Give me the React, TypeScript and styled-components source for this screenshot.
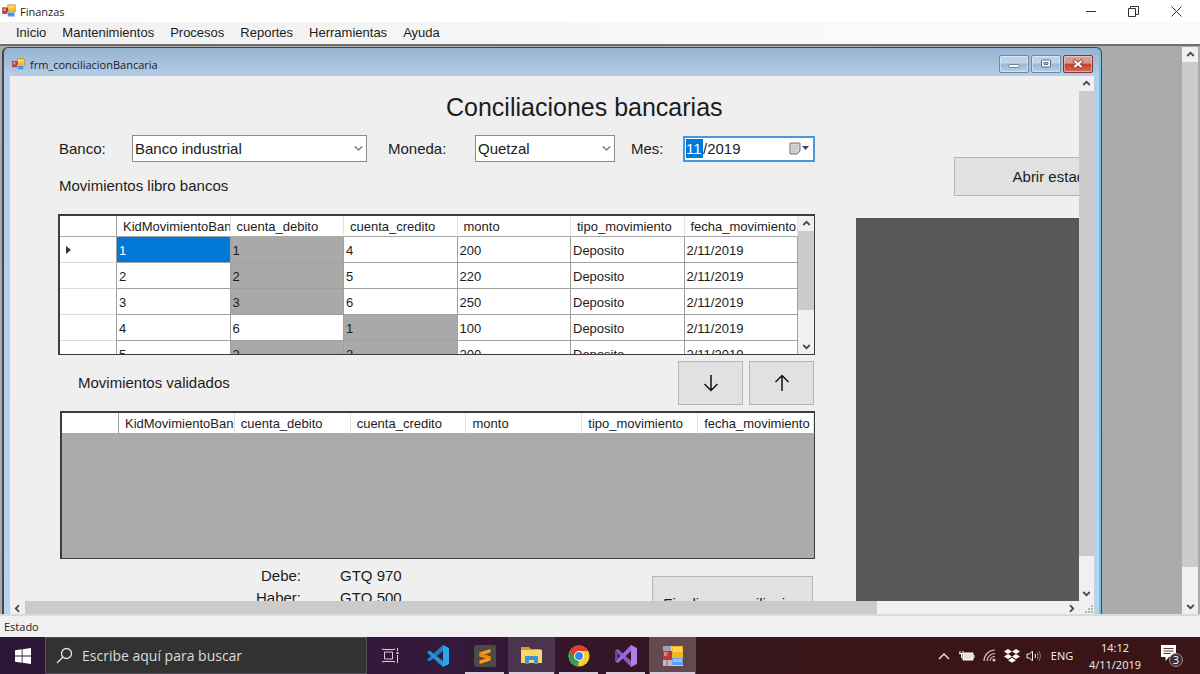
import React from "react";
import styled, { createGlobalStyle, css } from "styled-components";

const GlobalStyle = createGlobalStyle`
  * { box-sizing: border-box; }
  body {
    margin: 0;
    font-family: "Liberation Sans", Arial, sans-serif;
    color: #1c1c1c;
    overflow: hidden;
  }
  button, input, select { font: inherit; color: inherit; margin: 0; }
`;

const UI_FONT = '"Open Sans", "Noto Sans", sans-serif';

/* ---------- main window ---------- */

const Screen = styled.div`
  height: 100vh;
  display: flex;
  flex-direction: column;
  background: #efefef;
`;

const TitleBar = styled.header`
  height: 22px;
  flex: none;
  display: flex;
  align-items: center;
  gap: 4px;
  padding: 0 2px;
  background: #fff;
  font: 11px ${UI_FONT};
`;

const WindowButtons = styled.div`
  margin-left: auto;
  display: flex;
`;

const WindowButton = styled.button`
  width: 43px;
  height: 22px;
  padding: 0;
  border: 0;
  background: none;
  display: flex;
  align-items: center;
  justify-content: center;
`;

const MenuBar = styled.nav`
  height: 22px;
  flex: none;
  display: flex;
  align-items: center;
  gap: 16px;
  padding: 0 16px;
  background: linear-gradient(90deg, #f0f0f0, #fafafa 75%);
`;

const MenuItem = styled.button`
  padding: 0;
  border: 0;
  background: none;
  font-size: 13px;
  line-height: 20px;
`;

const Workspace = styled.main`
  flex: 1;
  min-height: 0;
  display: flex;
  padding: 1px 2px 0;
  border-top: 2px solid #6f6f6f;
  background: #ababab;
`;

const StatusBar = styled.footer`
  height: 23px;
  flex: none;
  padding: 0 4px;
  border-top: 2px solid #dadada;
  background: #f0f0f0;
  font: 11px/22px ${UI_FONT};
`;

/* ---------- scroll bars ---------- */

const Bar = styled.div<{ $horizontal?: boolean; $size: number }>`
  flex: none;
  display: flex;
  background: #f0f0f0;
  ${(p) =>
    p.$horizontal
      ? css`flex-direction: row; height: ${p.$size}px;`
      : css`flex-direction: column; align-items: center; width: ${p.$size}px;`}
`;

const BarArrow = styled.button`
  flex: none;
  width: 15px;
  height: 15px;
  padding: 0;
  border: 0;
  background: none;
  display: flex;
  align-items: center;
  justify-content: center;
`;

const Track = styled.div<{ $horizontal?: boolean }>`
  flex: 1;
  min-height: 0;
  align-self: stretch;
  display: flex;
  flex-direction: ${(p) => (p.$horizontal ? "row" : "column")};
`;

const Thumb = styled.div<{ $share: number }>`
  flex: 0 0 ${(p) => p.$share}%;
  background: #cbcbcb;
`;

const turns = { up: 0, right: 90, down: 180, left: 270 };

function Chevron({ to }: { to: keyof typeof turns }) {
  return (
    <svg width="9" height="9" viewBox="0 0 9 9" fill="none" stroke="#4a4a4a" strokeWidth="1.8">
      <path d="M1.2 6 4.5 2.8 7.8 6" transform={`rotate(${turns[to]} 4.5 4.5)`} />
    </svg>
  );
}

function ScrollBar({ horizontal, share, size = 15 }: { horizontal?: boolean; share: number; size?: number }) {
  return (
    <Bar $horizontal={horizontal} $size={size}>
      <BarArrow aria-label={horizontal ? "Izquierda" : "Arriba"} tabIndex={-1}>
        <Chevron to={horizontal ? "left" : "up"} />
      </BarArrow>
      <Track $horizontal={horizontal}>
        <Thumb $share={share} />
      </Track>
      <BarArrow aria-label={horizontal ? "Derecha" : "Abajo"} tabIndex={-1}>
        <Chevron to={horizontal ? "right" : "down"} />
      </BarArrow>
    </Bar>
  );
}

/* ---------- child form ---------- */

const ChildForm = styled.section`
  flex: 1;
  min-width: 0;
  margin-right: 80px;
  display: flex;
  flex-direction: column;
  padding: 0 7px 0 6px;
  border: 2px solid #42484e;
  border-width: 1px 1px 0 2px;
  border-radius: 6px 6px 0 0;
  background: linear-gradient(180deg, #98b3d0, #b4cde8 28px, #b9d3ec);
  box-shadow: inset -2px 0 0 #6fc3e2;
`;

const ChildTitle = styled.header`
  height: 28px;
  flex: none;
  display: flex;
  align-items: center;
  gap: 5px;
  padding: 4px 1px 0 2px;
  font: 11px ${UI_FONT};
`;

const ChildButtons = styled.div`
  margin-left: auto;
  display: flex;
  gap: 2px;
`;

const ChildButton = styled.button<{ $close?: boolean }>`
  width: 30px;
  height: 18px;
  padding: 0;
  border: 1px solid ${(p) => (p.$close ? "#7a3a3c" : "#7088a4")};
  border-radius: 2px;
  box-shadow: inset 0 0 0 1px #ffffff66;
  background: ${(p) =>
    p.$close
      ? "linear-gradient(#dd9a8e 0 45%, #c2402c 50%, #d3705c)"
      : "linear-gradient(#bdd3ea 0 45%, #9bb8d6 50%, #b5cfe8)"};
  display: flex;
  align-items: center;
  justify-content: center;
`;

const ClientArea = styled.div`
  flex: 1;
  min-height: 0;
  display: flex;
  background: #efefef;
`;

const FormBody = styled.div`
  flex: 1;
  min-width: 0;
  overflow: hidden;
  padding: 16px 0 0 48px;
  font-size: 15px;
`;

const Heading = styled.h1`
  margin: 0 0 13px;
  padding-left: 388px;
  font-size: 25px;
  line-height: 30px;
  font-weight: 400;
  white-space: nowrap;
`;

const Columns = styled.div`
  display: flex;
  gap: 41px;
`;

const LeftColumn = styled.div`
  flex: none;
  width: 757px;
`;

const RightColumn = styled.aside`
  flex: none;
  width: 366px;
  display: flex;
  flex-direction: column;
  gap: 22px;
  padding-top: 22px;
`;

const ReportPanel = styled.div`
  height: 420px;
  width: 330px;
  background: #585858;
`;

const Filters = styled.div`
  display: flex;
  align-items: center;
  height: 27px;
`;

const FieldLabel = styled.label<{ $width: number; $gap?: number }>`
  width: ${(p) => p.$width}px;
  margin-left: ${(p) => p.$gap ?? 0}px;
  padding-left: 1px;
`;

const SelectBox = styled.div<{ $width: number }>`
  position: relative;
  width: ${(p) => p.$width}px;
  svg {
    position: absolute;
    right: 4px;
    top: 10px;
    pointer-events: none;
  }
`;

const Select = styled.select`
  appearance: none;
  display: block;
  width: 100%;
  height: 27px;
  padding: 0 20px 0 2px;
  border: 1px solid #8c8c8c;
  border-radius: 0;
  background: #fff;
`;

const MonthPicker = styled.div`
  display: flex;
  align-items: center;
  width: 132px;
  height: 26px;
  padding: 0 4px 0 1px;
  border: 2px solid #4b97d9;
  background: #fff;
`;

const DatePart = styled.input<{ $active?: boolean; $width: number }>`
  width: ${(p) => p.$width}px;
  height: 19px;
  padding: 0;
  border: 0;
  outline: 0;
  background: ${(p) => (p.$active ? "#0078d7" : "transparent")};
  color: ${(p) => (p.$active ? "#fff" : "inherit")};
`;

const CalendarButton = styled.button`
  margin-left: auto;
  padding: 0;
  border: 0;
  background: none;
  display: flex;
`;

const Caption = styled.h2`
  margin: 0;
  font-size: 15px;
  line-height: 20px;
  font-weight: 400;
`;

const BooksCaption = styled(Caption)`
  margin: 14px 0 18px 1px;
`;

const FlatButton = styled.button<{ $width: number; $height: number }>`
  flex: none;
  width: ${(p) => p.$width}px;
  height: ${(p) => p.$height}px;
  padding: 0;
  border: 1px solid #b5b5b5;
  background: #e1e1e1;
  display: flex;
  align-items: center;
  justify-content: center;
  white-space: nowrap;
`;

const StatementButton = styled(FlatButton)`
  align-self: flex-end;
`;

const MoveRow = styled.div`
  display: flex;
  align-items: center;
  gap: 6px;
  margin: 6px 1px 6px 20px;
  ${Caption} { flex: 1; }
`;

/* ---------- data grids ---------- */

const GridFrame = styled.div<{ $height: number; $inset?: number }>`
  display: flex;
  height: ${(p) => p.$height}px;
  margin-left: ${(p) => p.$inset ?? 0}px;
  overflow: hidden;
  border: 1px solid #3c3c3c;
  border-top-width: 2px;
  border-left-width: 2px;
  background: #ababab;
`;

const GridScroll = styled.div`
  flex: 1;
  min-width: 0;
  overflow: hidden;
`;

const Table = styled.table`
  width: 100%;
  table-layout: fixed;
  border-collapse: separate;
  border-spacing: 0;
  font-size: 13px;
`;

const HeadCell = styled.th`
  height: 21px;
  padding: 0 0 0 6px;
  overflow: hidden;
  text-align: left;
  font-weight: 400;
  white-space: nowrap;
  background: #fff;
  border-right: 1px solid #e4e4e4;
  border-bottom: 1px solid #a8a8a8;
  &:first-child { border-right-color: #a0a0a0; }
`;

const RowHead = styled.th`
  padding: 0 0 0 6px;
  text-align: left;
  background: #fff;
  border-right: 1px solid #a0a0a0;
  border-bottom: 1px solid #dcdcdc;
  svg { display: block; }
`;

const Cell = styled.td<{ $tone: "plain" | "selected" | "marked" }>`
  height: 26px;
  padding: 2px 0 0 2px;
  white-space: nowrap;
  border-right: 1px solid #a0a0a0;
  border-bottom: 1px solid #a0a0a0;
  ${(p) => p.$tone === "plain" && "background: #fff;"}
  ${(p) => p.$tone === "selected" && "background: #0078d7; color: #fff;"}
  ${(p) => p.$tone === "marked" && "background: #a9a9a9;"}
`;

const HEADERS = [
  "KidMovimientoBancario",
  "cuenta_debito",
  "cuenta_credito",
  "monto",
  "tipo_movimiento",
  "fecha_movimiento",
];

const ROWS = [
  { values: ["1", "1", "4", "200", "Deposito", "2/11/2019"], marked: [1] },
  { values: ["2", "2", "5", "220", "Deposito", "2/11/2019"], marked: [1] },
  { values: ["3", "3", "6", "250", "Deposito", "2/11/2019"], marked: [1] },
  { values: ["4", "6", "1", "100", "Deposito", "2/11/2019"], marked: [2] },
  { values: ["5", "2", "2", "200", "Deposito", "2/11/2019"], marked: [1, 2] },
];

function DataGrid({ rows }: { rows: typeof ROWS }) {
  return (
    <Table>
      <colgroup>
        <col width="57" />
        {HEADERS.map((h) => <col key={h} />)}
      </colgroup>
      <thead>
        <tr>
          <HeadCell aria-label="Fila" />
          {HEADERS.map((h) => <HeadCell key={h} scope="col">{h}</HeadCell>)}
        </tr>
      </thead>
      <tbody>
        {rows.map((row, r) => (
          <tr key={r}>
            <RowHead scope="row">
              {r === 0 && <svg width="6" height="8"><path d="M0 0 5 4 0 8z" fill="#333" /></svg>}
            </RowHead>
            {row.values.map((v, c) => (
              <Cell key={c} $tone={r === 0 && c === 0 ? "selected" : row.marked.includes(c) ? "marked" : "plain"}>
                {v}
              </Cell>
            ))}
          </tr>
        ))}
      </tbody>
    </Table>
  );
}

const Summary = styled.div`
  display: flex;
  justify-content: space-between;
  align-items: flex-start;
  padding: 6px 2px 0 0;
`;

const Totals = styled.dl`
  margin: 0;
  display: grid;
  grid-template-columns: 243px auto;
  column-gap: 39px;
  line-height: 22px;
  dt { text-align: right; }
  dd { margin: 0; }
`;

const FinishButton = styled(FlatButton)`
  margin-top: 11px;
`;

const SizeGrip = styled.div`
  width: 15px;
  display: flex;
  align-items: flex-end;
  justify-content: flex-end;
  background: #f0f0f0;
`;

const BottomScroll = styled.div`
  flex: none;
  height: 13px;
  display: flex;
  align-items: stretch;
  & > :first-child { flex: 1; }
`;

/* ---------- taskbar ---------- */

const TaskBar = styled.div`
  height: 37px;
  flex: none;
  display: flex;
  background: linear-gradient(90deg, #2d1737, #34193a 38%, #351520 56%, #3a1517 70%, #3a1416);
  color: #f2f2f2;
  font-family: ${UI_FONT};
`;

const StartButton = styled.button`
  width: 45px;
  padding: 0;
  border: 0;
  background: none;
  display: flex;
  align-items: center;
  justify-content: center;
`;

const SearchBox = styled.label`
  width: 322px;
  display: flex;
  align-items: center;
  gap: 9px;
  padding-left: 10px;
  border: 1px solid #54505a;
  background: #323232;
`;

const SearchInput = styled.input`
  flex: 1;
  min-width: 0;
  padding: 0;
  border: 0;
  background: none;
  font-size: 14px;
  &::placeholder { color: #dcdcdc; opacity: 1; }
`;

const TaskButton = styled.button<{ $open?: boolean; $tint?: string }>`
  width: 47px;
  padding: 0;
  border: 0;
  background-color: ${(p) => p.$tint ?? "transparent"};
  background-image: ${(p) => (p.$open ? "linear-gradient(#dccbd8, #dccbd8)" : "none")};
  background-repeat: no-repeat;
  background-position: center bottom;
  background-size: ${(p) => (p.$tint ? 45 : 39)}px 2px;
  display: flex;
  align-items: center;
  justify-content: center;
`;

const Tray = styled.div`
  margin-left: auto;
  display: flex;
  align-items: center;
  padding-right: 14px;
  font-size: 11px;
`;

const TrayButton = styled.button<{ $width: number }>`
  width: ${(p) => p.$width}px;
  padding: 0;
  border: 0;
  background: none;
  display: flex;
  align-items: center;
  justify-content: center;
`;

const Clock = styled.time`
  width: 72px;
  margin-right: 7px;
  text-align: center;
  line-height: 17px;
`;

/* ---------- drawings ---------- */

function FormsIcon({ size }: { size: number }) {
  return (
    <svg width={size} height={size} viewBox="0 0 22 22" aria-hidden="true">
      <rect x="9" y="1" width="12" height="12" rx="1" fill="#f2bd2b" stroke="#9a762a" strokeWidth=".8" />
      <rect x="10" y="2" width="10" height="5" fill="#fbe07e" opacity=".7" />
      <rect x="1" y="6" width="8" height="9" fill="#c93c33" stroke="#7e2522" strokeWidth=".8" />
      <rect x="2" y="7" width="4" height="4" fill="#ee8a80" />
      <rect x="9" y="13" width="11" height="7" fill="#4c8fe6" stroke="#cfe0f7" strokeWidth=".8" />
    </svg>
  );
}

function FormsTaskIcon() {
  return (
    <svg width="22" height="22" viewBox="0 0 22 22" aria-hidden="true">
      <path d="M1 1h20v20H1z" fill="#d8d3d4" />
      <path d="M1 1h8v5H1z" fill="#a5a0a3" />
      <path d="M1 6h9v9H1z" fill="#c7313a" />
      <path d="M2 7h4v4H2z" fill="#ec7f80" />
      <path d="M1 15h9v6H1z" fill="#c3babd" />
      <path d="M5 6v15" stroke="#77565e" strokeWidth=".8" />
      <path d="M10 1h11v12H10z" fill="#f2b51f" />
      <path d="M11 2h9v5h-9z" fill="#fbd75e" />
      <path d="M10 13h11v7H10z" fill="#5f9df0" />
      <path d="M11 14h9v3h-9z" fill="#96c1fa" />
    </svg>
  );
}

function SelectArrow() {
  return (
    <svg width="9" height="7" viewBox="0 0 9 7" fill="none" stroke="#6a6a6a" strokeWidth="1.2">
      <path d="M.8 1.5 4.5 5 8.2 1.5" />
    </svg>
  );
}

function MoveArrow({ down }: { down?: boolean }) {
  return (
    <svg width="16" height="18" viewBox="0 0 16 18" fill="none" stroke="#111" strokeWidth="1.5">
      <path d="M8 17V1.5M1.5 8 8 1.5 14.5 8" transform={down ? "rotate(180 8 9)" : undefined} />
    </svg>
  );
}

export default function App() {
  return (
    <>
      <GlobalStyle />
      <Screen>
        <TitleBar>
          <FormsIcon size={14} />
          <span>Finanzas</span>
          <WindowButtons>
            <WindowButton aria-label="Minimizar">
              <svg width="10" height="10"><path d="M0 5.5h10" stroke="#333" /></svg>
            </WindowButton>
            <WindowButton aria-label="Restaurar">
              <svg width="11" height="11" fill="none" stroke="#333"><path d="M.5 2.500h7v8h-7zM2.500 2V.5h8v8H8" /></svg>
            </WindowButton>
            <WindowButton aria-label="Cerrar">
              <svg width="11" height="11" stroke="#333"><path d="M.5.5l10 10M10.500.5l-10 10" /></svg>
            </WindowButton>
          </WindowButtons>
        </TitleBar>

        <MenuBar>
          {["Inicio", "Mantenimientos", "Procesos", "Reportes", "Herramientas", "Ayuda"].map((m) => (
            <MenuItem key={m}>{m}</MenuItem>
          ))}
        </MenuBar>

        <Workspace>
          <ChildForm>
            <ChildTitle>
              <FormsIcon size={13} />
              <span>frm_conciliacionBancaria</span>
              <ChildButtons>
                <ChildButton aria-label="Minimizar formulario">
                  <svg width="12" height="12"><rect x="1" y="6.500" width="10" height="3" rx="1" fill="#fff" stroke="#5a6c80" strokeWidth=".8" /></svg>
                </ChildButton>
                <ChildButton aria-label="Maximizar formulario">
                  <svg width="12" height="12">
                    <rect x="1.500" y="2" width="9" height="7" rx="1" fill="#fff" stroke="#53657a" />
                    <rect x="4" y="4.500" width="4" height="2" fill="#9fb6cf" stroke="#53657a" strokeWidth=".8" />
                  </svg>
                </ChildButton>
                <ChildButton $close aria-label="Cerrar formulario">
                  <svg width="12" height="12" strokeLinecap="square">
                    <path d="M3 3.500l6 5M9 3.500l-6 5" stroke="#6b3434" strokeWidth="3.500" />
                    <path d="M3 3.500l6 5M9 3.500l-6 5" stroke="#fff" strokeWidth="2" />
                  </svg>
                </ChildButton>
              </ChildButtons>
            </ChildTitle>

            <ClientArea>
              <FormBody>
                <Heading>Conciliaciones bancarias</Heading>
                <Columns>
                  <LeftColumn>
                    <Filters>
                      <FieldLabel $width={74} htmlFor="banco">Banco:</FieldLabel>
                      <SelectBox $width={235}>
                        <Select id="banco"><option>Banco industrial</option></Select>
                        <SelectArrow />
                      </SelectBox>
                      <FieldLabel $width={88} $gap={20} htmlFor="moneda">Moneda:</FieldLabel>
                      <SelectBox $width={140}>
                        <Select id="moneda"><option>Quetzal</option></Select>
                        <SelectArrow />
                      </SelectBox>
                      <FieldLabel $width={53} $gap={15} htmlFor="mes">Mes:</FieldLabel>
                      <MonthPicker>
                        <DatePart id="mes" $active $width={17} defaultValue="11" />
                        <span>/</span>
                        <DatePart $width={40} aria-label="Año" defaultValue="2019" />
                        <CalendarButton aria-label="Abrir calendario">
                          <svg width="20" height="13">
                            <path d="M1 1h10v8l-3 3H1z" fill="#d6d3d6" stroke="#77737a" />
                            <path d="M3 4h6M3 6.500h6M3 9h4" stroke="#c2bec4" />
                            <path d="M13 4h7l-3.500 4z" fill="#34496b" />
                          </svg>
                        </CalendarButton>
                      </MonthPicker>
                    </Filters>

                    <BooksCaption>Movimientos libro bancos</BooksCaption>
                    <GridFrame $height={141}>
                      <GridScroll><DataGrid rows={ROWS} /></GridScroll>
                      <ScrollBar share={73} size={16} />
                    </GridFrame>

                    <MoveRow>
                      <Caption>Movimientos validados</Caption>
                      <FlatButton $width={65} $height={44} aria-label="Validar movimiento"><MoveArrow down /></FlatButton>
                      <FlatButton $width={65} $height={44} aria-label="Quitar movimiento"><MoveArrow /></FlatButton>
                    </MoveRow>

                    <GridFrame $height={148} $inset={2}>
                      <GridScroll><DataGrid rows={[]} /></GridScroll>
                    </GridFrame>

                    <Summary>
                      <Totals>
                        <dt>Debe:</dt><dd>GTQ 970</dd>
                        <dt>Haber:</dt><dd>GTQ 500</dd>
                      </Totals>
                      <FinishButton $width={161} $height={54}>Finalizar conciliacion</FinishButton>
                    </Summary>
                  </LeftColumn>

                  <RightColumn>
                    <StatementButton $width={268} $height={39}>Abrir estado de cuenta</StatementButton>
                    <ReportPanel />
                  </RightColumn>
                </Columns>
              </FormBody>
              <ScrollBar share={94} />
            </ClientArea>
            <BottomScroll>
              <ScrollBar horizontal share={82} size={13} />
              <SizeGrip>
                <svg width="10" height="10" fill="#b0b0b0">
                  <path d="M7 1h2v2H7zM4 4h2v2H4zM7 4h2v2H7zM1 7h2v2H1zM4 7h2v2H4zM7 7h2v2H7z" />
                </svg>
              </SizeGrip>
            </BottomScroll>
          </ChildForm>
          <ScrollBar share={94} size={16} />
        </Workspace>

        <StatusBar>Estado</StatusBar>

        <TaskBar>
          <StartButton aria-label="Inicio de Windows">
            <svg width="16" height="16" viewBox="0 0 16 16" fill="#fff">
              <path d="M0 2.200 6.700 1.300V7.600H0zM7.500 1.200 16 0V7.600H7.500zM0 8.400H6.700V14.700L0 13.800zM7.500 8.400H16V16L7.500 14.800z" />
            </svg>
          </StartButton>
          <SearchBox>
            <svg width="17" height="17" viewBox="0 0 17 17" fill="none" stroke="#e6e6e6" strokeWidth="1.300">
              <circle cx="10.500" cy="6.500" r="5" />
              <path d="M7 10 1 16" />
            </svg>
            <SearchInput aria-label="Buscar" placeholder="Escribe aquí para buscar" />
          </SearchBox>

          <TaskButton aria-label="Vista de tareas">
            <svg width="17" height="15" viewBox="0 0 17 15" fill="none" stroke="#d8d0da">
              <path d="M2.500 4h8v7h-8zM.5.5v1h12v-1M.5 14.500v-1h12v1M15.500 0v3M15.500 7v8" />
              <path d="M14.500 5h2" strokeWidth="2" />
            </svg>
          </TaskButton>
          <TaskButton aria-label="Visual Studio Code">
            <svg width="24" height="24" viewBox="0 0 24 24">
              <path d="M17 1 23 4v16l-6 3z" fill="#2ba5ef" />
              <path d="M17 1v6L3.500 17.500 1 15.500z" fill="#1b82ca" />
              <path d="M17 23v-6L3.500 6.500 1 8.500z" fill="#2294dc" />
            </svg>
          </TaskButton>
          <TaskButton $open aria-label="Sublime Text">
            <svg width="22" height="22" viewBox="0 0 22 22">
              <rect width="22" height="22" rx="2" fill="#4b4b4a" />
              <path d="M5.500 7.500 16.500 4v3.500L10 9.500l6.500 2v4L5.500 19v-3.500l6.500-2-6.500-2z" fill="#ff9b16" />
              <path d="M5.500 7.500 16.500 11.500v3L5.500 11z" fill="#ef8510" />
            </svg>
          </TaskButton>
          <TaskButton $open $tint="#4b3450" aria-label="Explorador de archivos">
            <svg width="21" height="19" viewBox="0 0 21 19">
              <path d="M0 1h8l2 2h10v4H0z" fill="#dc9c22" />
              <path d="M0 4h21v13H0z" fill="#fbd768" />
              <path d="M4 18v-8h13v8h-4v-4H8v4z" fill="#3d95d5" />
            </svg>
          </TaskButton>
          <TaskButton $open aria-label="Google Chrome">
            <svg width="22" height="22" viewBox="0 0 22 22">
              <circle cx="11" cy="11" r="10.500" fill="#f9cf2e" />
              <path d="M11 11 6.200 13.800 1.900 5.800A10.500 10.500 0 0 1 20.200 6H11z" fill="#e33b2e" />
              <path d="M1.900 5.800 6.700 13.500 11 16 9.800 21.400A10.500 10.500 0 0 1 1.900 5.800z" fill="#2fa04e" />
              <circle cx="11" cy="11" r="5" fill="#fff" />
              <circle cx="11" cy="11" r="4" fill="#3f83ee" />
            </svg>
          </TaskButton>
          <TaskButton $open aria-label="Visual Studio">
            <svg width="24" height="24" viewBox="0 0 24 24">
              <path d="M17 1 23 4v16l-6 3z" fill="#b27be6" />
              <path d="M1 6.500 4 5l13 12v6z" fill="#8e56cc" />
              <path d="M17 1v6L4 19l-3-1.500z" fill="#9d68d8" />
              <path d="M1 6.500 4 8v8l-3 1.500z" fill="#6d3fa6" />
            </svg>
          </TaskButton>
          <TaskButton $open $tint="#64494f" aria-label="Finanzas">
            <FormsTaskIcon />
          </TaskButton>

          <Tray>
            <TrayButton $width={23} aria-label="Mostrar iconos ocultos">
              <svg width="12" height="8" fill="none" stroke="#eee" strokeWidth="1.300"><path d="M1 7 6 2l5 5" /></svg>
            </TrayButton>
            <TrayButton $width={23} aria-label="Batería">
              <svg width="16" height="12" viewBox="0 0 16 12">
                <path d="M4 3h10v7H4z" fill="#e8e0e0" stroke="#fff" />
                <path d="M14.500 5h1v3h-1z" fill="#fff" />
                <path d="M1 1v2M4 1v2M0 3.500h5M2.500 4v3.500H4" stroke="#fff" fill="none" />
              </svg>
            </TrayButton>
            <TrayButton $width={23} aria-label="Red inalámbrica">
              <svg width="14" height="13" viewBox="0 0 14 13" fill="none" stroke="#cfc2c3" strokeWidth="1.200">
                <path d="M1 12A11 11 0 0 1 12 1M4 12A8 8 0 0 1 12 4.500M7 12A5 5 0 0 1 12 7.500" />
                <circle cx="11" cy="11" r="1" fill="#fff" />
              </svg>
            </TrayButton>
            <TrayButton $width={21} aria-label="Dropbox">
              <svg width="16" height="14" viewBox="0 0 16 14" fill="#fff">
                <path d="M4 0l4 2.500L4 5 0 2.500zM12 0l4 2.500L12 5 8 2.500zM4 5l4 2.500L4 10 0 7.500zM12 5l4 2.500-4 2.500-4-2.500zM8 8.800l4 2.500L8 13.800l-4-2.500z" />
              </svg>
            </TrayButton>
            <TrayButton $width={23} aria-label="Volumen">
              <svg width="15" height="12" viewBox="0 0 15 12" fill="none" stroke="#eee">
                <path d="M1 4h2.500L6.500 1v10L3.500 8H1z" />
                <path d="M9 4q1.300 2 0 4" />
                <path d="M11 2.500q2.200 3.500 0 7M13 1q3 5 0 10" stroke="#8f7577" />
              </svg>
            </TrayButton>
            <TrayButton $width={34} aria-label="Idioma">ENG</TrayButton>
            <Clock>14:12<br />4/11/2019</Clock>
            <TrayButton $width={28} aria-label="Notificaciones: 3">
              <svg width="25" height="24" viewBox="0 0 25 24">
                <path d="M1 1h15v12H9l-3.500 4v-4H1z" fill="#fff" />
                <path d="M3.500 4.500h10M3.500 7h10M3.500 9.500h7" stroke="#54383a" />
                <circle cx="16" cy="16" r="6.500" fill="#3a3034" stroke="#9b8c8e" />
                <text x="16" y="20" textAnchor="middle" fontSize="11" fill="#fff">3</text>
              </svg>
            </TrayButton>
          </Tray>
        </TaskBar>
      </Screen>
    </>
  );
}
